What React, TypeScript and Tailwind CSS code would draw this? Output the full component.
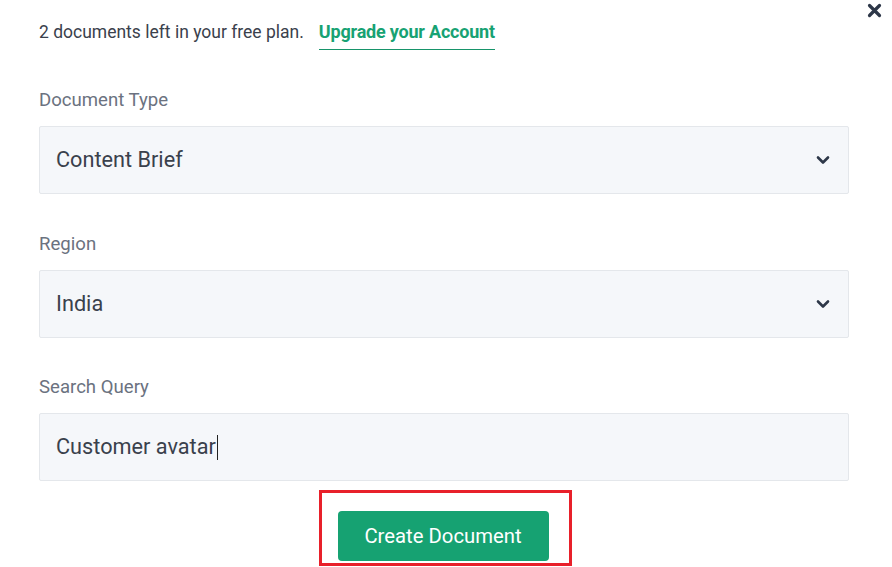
import React from "react";

function Chevron() {
  return (
    <svg width="14" height="10" viewBox="0 0 14 10" className="text-[#2d3748]">
      <path d="M2 2.5 L7 7.5 L12 2.5" fill="none" stroke="currentColor" strokeWidth="2.6" strokeLinecap="round" strokeLinejoin="round" />
    </svg>
  );
}

function Field({ label, value, select, caret }: { label: string; value: string; select?: boolean; caret?: boolean }) {
  return (
    <div className="flex flex-col">
      <div className="text-[18.6px] leading-[20px] text-[#6b7280] h-[20px]">{label}</div>
      <div className="mt-[16px] h-[68px] bg-[#f5f7fa] border border-[#e4e7eb] rounded-[2px] flex items-center pl-[16px] pr-[18px]">
        <div className="flex-1 text-[21.7px] text-[#3a414c] flex items-center pt-[1px]">
          {value}
          {caret && <span className="inline-block w-[1.5px] h-[25px] bg-[#222] ml-[1px]" />}
        </div>
        {select && <Chevron />}
      </div>
    </div>
  );
}

export default function App() {
  return (
    <div className="w-[892px] h-[567px] bg-white relative overflow-hidden" style={{ fontFamily: "Roboto, 'Liberation Sans', sans-serif" }}>
      <button className="absolute right-[10px] top-[3px] text-[#2d3748]">
        <svg width="15" height="15" viewBox="0 0 15 15">
          <path d="M2.5 2.5 L12.5 12.5 M12.5 2.5 L2.5 12.5" stroke="currentColor" strokeWidth="3.2" strokeLinecap="round" />
        </svg>
      </button>
      <div className="pl-[39px] pr-[43px]">
        <div className="flex items-start pt-[21px] h-[80px]">
          <span className="text-[17.5px] leading-[22px] text-[#3a414c]">2 documents left in your free plan.</span>
          <span className="ml-[15px] text-[18px] leading-[22px] font-bold text-[#17a273] border-b border-[#17946a] pb-[6px] tracking-[-0.2px]">
            Upgrade your Account
          </span>
        </div>
        <div className="flex flex-col gap-[39.5px] mt-[10px]">
          <Field label="Document Type" value="Content Brief" select />
          <Field label="Region" value="India" select />
          <Field label="Search Query" value="Customer avatar" caret />
        </div>
      </div>
      <div className="flex justify-center mt-[9px] pr-[2px]">
        <div className="border-[3px] border-[#e8202a] w-[253px] h-[76px] flex justify-center pt-[18px] pr-[4px]">
          <button className="w-[211px] h-[50px] shrink-0 bg-[#16a272] rounded-[4px] text-white text-[20.3px]">Create Document</button>
        </div>
      </div>
    </div>
  );
}
